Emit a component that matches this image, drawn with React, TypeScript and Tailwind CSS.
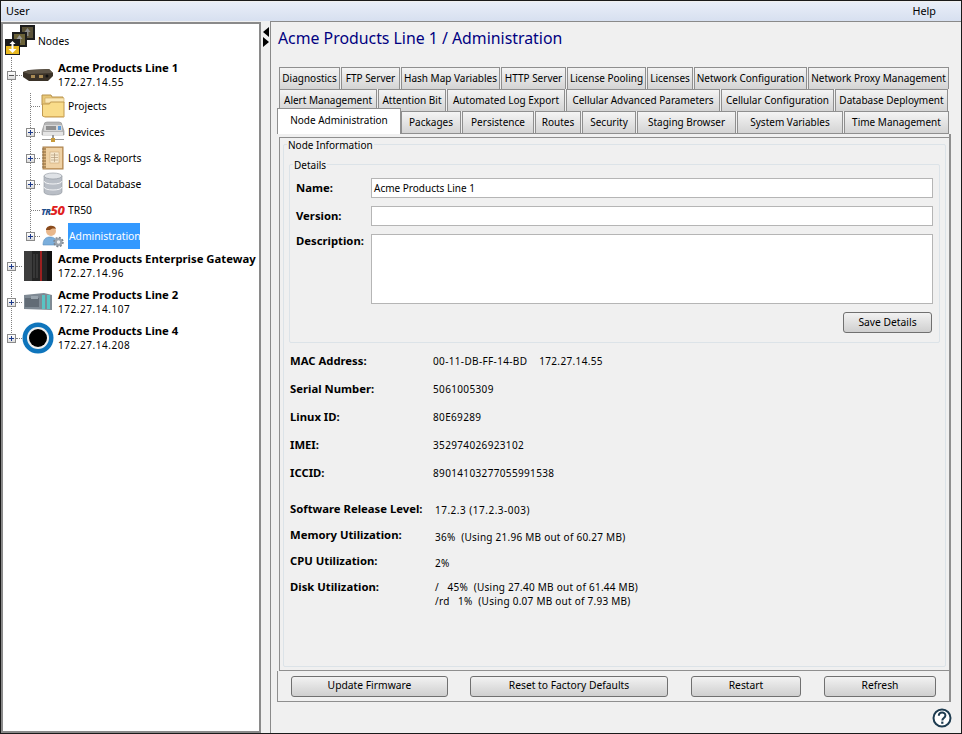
import React from "react";

const tabRow1 = [
  ["Diagnostics", 61], ["FTP Server", 59], ["Hash Map Variables", 99], ["HTTP Server", 65], ["License Pooling", 79], ["Licenses", 46], ["Network Configuration", 113], ["Network Proxy Management", 141],
] as const;
const tabRow2 = [
  ["Alert Management", 98], ["Attention Bit", 68], ["Automated Log Export", 118], ["Cellular Advanced Parameters", 154], ["Cellular Configuration", 113], ["Database Deployment", 113],
] as const;
const tabRow3 = [
  ["Packages", 60], ["Persistence", 72], ["Routes", 46], ["Security", 54], ["Staging Browser", 99], ["System Variables", 106], ["Time Management", 105],
] as const;

function Tab({ label, w }: { label: string; w: number }) {
  return (
    <div
      style={{ width: w }}
      className="h-[22px] shrink-0 flex items-center justify-center whitespace-nowrap border border-b-0 border-[#8f8f8f] bg-gradient-to-b from-[#f4f4f4] to-[#d4d4d4] text-black"
    >
      {label}
    </div>
  );
}

function Plus({ minus }: { minus?: boolean }) {
  return (
    <span className="w-[9px] h-[9px] border border-[#8a8a8a] bg-gradient-to-b from-white to-[#dcdcdc] flex items-center justify-center relative shrink-0">
      <span className={"absolute w-[5px] h-px " + (minus ? "bg-[#555]" : "bg-[#1d3a8a]")} />
      {!minus && <span className="absolute w-px h-[5px] bg-[#1d3a8a]" />}
    </span>
  );
}

function NodesIcon() {
  return (
    <svg width="32" height="33" viewBox="0 0 32 33">
      <rect x="17" y="1" width="15" height="15" fill="#1c1c1c" />
      <rect x="19" y="3" width="11" height="11" fill="#5a5238" />
      <path d="M24.500 4l3 4h-2v4h-2V8h-2z" fill="#8a8a8a" />
      <rect x="9" y="8" width="15" height="15" fill="#1c1c1c" />
      <rect x="11" y="10" width="11" height="11" fill="#6b6238" />
      <path d="M16.500 11l3 4h-2v4h-2v-4h-2z" fill="#9a9a9a" />
      <rect x="2" y="15" width="15" height="16" fill="#1c1c1c" />
      <rect x="3" y="22" width="13" height="8" fill="#e8b820" />
      <path d="M9.500 17l3 3h-2v5h3l-4 4-4-4h3v-5h-2z" fill="#fff" />
    </svg>
  );
}

function RouterIcon() {
  return (
    <svg width="32" height="14" viewBox="0 0 32 14">
      <path d="M1 4l6-2 20-1 4 4v3l-5 5H7l-6-4z" fill="#3a3228" />
      <path d="M1 4l6-2 20-1 4 4-24 1z" fill="#5c5346" />
      <rect x="9" y="7" width="4" height="3" fill="#a98b55" />
      <rect x="17" y="7" width="4" height="3" fill="#a98b55" />
      <circle cx="25" cy="8" r="1.500" fill="#111" />
    </svg>
  );
}

function FolderIcon() {
  return (
    <svg width="24" height="24" viewBox="0 0 24 24">
      <path d="M1 1h9l1 2h11v8H1z" fill="#e8c878" stroke="#b8924a" />
      <path d="M4 4h19v5H4z" fill="#fbe9b8" stroke="#c9a460" strokeWidth=".6" />
      <path d="M1.500 10h7l1-2h13.500v15H4l-2.500-1z" fill="#f9dc8a" stroke="#c19a50" />
      <path d="M3 22h20v1H3z" fill="#d8ae5c" />
    </svg>
  );
}

function DevicesIcon() {
  return (
    <svg width="24" height="24" viewBox="0 0 24 24">
      <path d="M3 5q0-3 3-3h12q3 0 3 3l2 6v4H1v-4z" fill="#b5b5b5" stroke="#909090" strokeWidth=".6" />
      <rect x="3" y="5" width="18" height="6" rx="1" fill="#d8d8d8" />
      <rect x="5" y="6" width="10" height="4" fill="#8f8f8f" />
      <rect x="17" y="6" width="3" height="4" fill="#5f9bd8" />
      <rect x="2" y="12" width="20" height="3" fill="#e4e4e4" />
      <rect x="11" y="15" width="2" height="5" fill="#999" />
      <rect x="1" y="19" width="22" height="1" fill="#999" />
      <rect x="10" y="18" width="4" height="4" fill="#c89b3c" />
    </svg>
  );
}

function LogsIcon() {
  return (
    <svg width="24" height="24" viewBox="0 0 24 24">
      <rect x="2" y="1" width="20" height="22" fill="#d9b078" stroke="#a87f4b" />
      <rect x="5" y="2" width="16" height="20" fill="#efd2a6" />
      <rect x="9" y="6" width="9" height="11" fill="#f8ead0" stroke="#c9a878" strokeWidth=".6" />
      <path d="M10 9h7M10 11.500h7M10 14h7M13.500 7v9" stroke="#b09878" strokeWidth=".7" />
      {[3, 6, 9, 12, 15, 18, 21].map((y) => (
        <path key={y} d={`M1 ${y}h4`} stroke="#8a6a40" />
      ))}
    </svg>
  );
}

function DbIcon() {
  return (
    <svg width="20" height="24" viewBox="0 0 20 24">
      <path d="M1 4v16c0 4 18 4 18 0V4z" fill="#b9bec6" stroke="#8d939c" strokeWidth=".6" />
      <ellipse cx="10" cy="4" rx="9" ry="3" fill="#dfe2e6" stroke="#8d939c" strokeWidth=".6" />
      <path d="M1 9c0 4 18 4 18 0M1 15c0 4 18 4 18 0" fill="none" stroke="#f2f3f5" />
    </svg>
  );
}

function AdminIcon() {
  return (
    <svg width="22" height="24" viewBox="0 0 22 24">
      <path d="M1 21c0-6 3-8 7-8s7 2 7 8z" fill="#7aaedc" stroke="#5d8fbe" strokeWidth=".6" />
      <circle cx="9" cy="7" r="5" fill="#e9b88c" />
      <path d="M4 6c0-5 9-6 10-1-3-1-5 0-6 1-1 0-3 0-4 0z" fill="#8a4a1c" />
      <circle cx="16.500" cy="18" r="4" fill="#9aa3ad" />
      <circle cx="16.500" cy="18" r="4.500" fill="none" stroke="#7b838c" strokeWidth="1.500" strokeDasharray="2 1.500" />
      <circle cx="16.500" cy="18" r="1.700" fill="#eef0f2" />
    </svg>
  );
}

function GatewayIcon() {
  return (
    <svg width="30" height="32" viewBox="0 0 30 32">
      <rect x="1" y="1" width="28" height="30" rx="1" fill="#242424" />
      <rect x="1" y="1" width="8" height="30" fill="#3d3d3d" />
      <rect x="17" y="1" width="2" height="30" fill="#9c2020" />
      <rect x="24" y="1" width="5" height="30" fill="#111" />
      <path d="M11 4v24M14 4v24" stroke="#4a4a4a" />
    </svg>
  );
}

function PlcIcon() {
  return (
    <svg width="30" height="20" viewBox="0 0 30 20">
      <path d="M1 3l20-2 8 2v15l-28-1z" fill="#7f8a94" />
      <rect x="2" y="6" width="14" height="9" fill="#626c76" />
      <rect x="8" y="4" width="7" height="3" fill="#9aa5ae" />
      <rect x="19" y="3" width="3" height="14" fill="#59c4c4" />
      <rect x="24" y="3" width="3" height="14" fill="#59c4c4" />
    </svg>
  );
}

function CircleIcon() {
  return (
    <svg width="32" height="32" viewBox="0 0 32 32">
      <circle cx="16" cy="16" r="15.500" fill="#0f75bc" />
      <circle cx="16" cy="16" r="11" fill="#f0f0f0" />
      <circle cx="16" cy="16" r="9" fill="#000" />
    </svg>
  );
}

function HelpIcon() {
  return (
    <svg width="20" height="20" viewBox="0 0 20 20">
      <circle cx="10" cy="10" r="8.500" fill="#fff" stroke="#1e3c50" strokeWidth="2" />
      <path d="M6.800 7.800c0-4.300 6.600-4.300 6.600-.4 0 2.500-3.100 2.600-3.100 5" fill="none" stroke="#1e3c50" strokeWidth="2" />
      <rect x="9.200" y="13.600" width="2.200" height="2.200" fill="#1e3c50" />
    </svg>
  );
}

function Child({ icon, label, plus, selected }: { icon: React.ReactNode; label: string; plus?: boolean; selected?: boolean }) {
  return (
    <div className="h-[26px] flex items-center text-[10.3px]">
      {plus ? (
        <>
          <span className="w-[23px] shrink-0" />
          <Plus />
          <span className="w-[5px] border-t border-dotted border-[#808080] shrink-0" />
        </>
      ) : (
        <>
          <span className="w-[28px] shrink-0" />
          <span className="w-[9px] border-t border-dotted border-[#808080] shrink-0" />
        </>
      )}
      <span className="w-[26px] flex items-center justify-center shrink-0">{icon}</span>
      <span className={(selected ? "bg-[#3399ff] text-white h-[26px] w-[72px] flex items-center pl-px " : "") + "ml-[2px] pt-[2px] whitespace-nowrap"}>{label}</span>
    </div>
  );
}

function NodeRow({ icon, name, ip, minus }: { icon: React.ReactNode; name: string; ip: string; minus?: boolean }) {
  return (
    <div className="h-[36px] flex items-center">
      <span className="w-[4px] shrink-0" />
      <Plus minus={minus} />
      <span className="w-[6px] border-t border-dotted border-[#808080] shrink-0" />
      <span className="w-[32px] flex items-center justify-center shrink-0">{icon}</span>
      <div className="ml-[4px] leading-[14px] whitespace-nowrap">
        <div className="font-bold text-[11.3px]">{name}</div>
        <div className="tracking-[0.55px]">{ip}</div>
      </div>
    </div>
  );
}

const infoRows = [
  ["MAC Address:", "00-11-DB-FF-14-BD    172.27.14.55"],
  ["Serial Number:", "5061005309"],
  ["Linux ID:", "80E69289"],
  ["IMEI:", "352974026923102"],
  ["ICCID:", "89014103277055991538"],
];

function Btn({ label, w }: { label: string; w: number }) {
  return (
    <button
      style={{ width: w }}
      className="h-[21px] rounded-[3px] border border-[#707070] bg-gradient-to-b from-[#f2f2f2] to-[#cfcfcf] text-black text-[10.3px] shrink-0"
    >
      {label}
    </button>
  );
}

export default function App() {
  return (
    <div className="w-[962px] h-[734px] bg-[#f0f0f0] text-black text-[10px] [font-family:'Noto_Sans',sans-serif] overflow-hidden flex flex-col border border-[#1a1a1a]">
      <div className="h-[19px] shrink-0 mt-px bg-gradient-to-b from-[#e9eef8] to-[#d7e0f0] flex items-center justify-between pl-[5px] pr-[25px] text-[10.8px]">
        <span>User</span>
        <span>Help</span>
      </div>
      <div className="flex-1 flex min-h-0">
        <div className="w-[260px] shrink-0 bg-white border-2 border-[#8a8a8a] relative mt-px">
          <span className="absolute left-[8px] top-[33px] h-[280px] border-l border-dotted border-[#808080]" />
          <span className="absolute left-[27px] top-[69px] h-[143px] border-l border-dotted border-[#808080]" />
          <div className="h-[33px] flex items-center">
            <span className="shrink-0"><NodesIcon /></span>
            <span className="ml-[3px] mt-[2px] text-[10.3px]">Nodes</span>
          </div>
          <NodeRow minus icon={<RouterIcon />} name="Acme Products Line 1" ip="172.27.14.55" />
          <Child icon={<FolderIcon />} label="Projects" />
          <Child plus icon={<DevicesIcon />} label="Devices" />
          <Child plus icon={<LogsIcon />} label="Logs & Reports" />
          <Child plus icon={<DbIcon />} label="Local Database" />
          <Child
            icon={<span className="italic font-extrabold tracking-[-0.5px] w-[24px] whitespace-nowrap leading-none"><span className="text-[#1f4e8c] text-[9px]">TR</span><span className="text-[#e02020] text-[13px]">50</span></span>}
            label="TR50"
          />
          <Child plus selected icon={<AdminIcon />} label="Administration" />
          <div className="-mt-px">
            <NodeRow icon={<GatewayIcon />} name="Acme Products Enterprise Gateway" ip="172.27.14.96" />
          </div>
          <NodeRow icon={<PlcIcon />} name="Acme Products Line 2" ip="172.27.14.107" />
          <NodeRow icon={<CircleIcon />} name="Acme Products Line 4" ip="172.27.14.208" />
        </div>
        <div className="w-[9px] shrink-0 flex flex-col items-center pt-[6px]">
          <span className="w-0 h-0 border-y-[5px] border-y-transparent border-r-[6px] border-r-black" />
          <span className="w-0 h-0 border-y-[5px] border-y-transparent border-l-[6px] border-l-black" />
        </div>
        <div className="flex-1 border-l border-t border-[#8a8a8a] flex flex-col pl-[8px] min-w-0">
          <div className="h-[45px] shrink-0 text-[#000080] text-[15.85px] pt-[4px] leading-[24px] -ml-px">
            Acme Products Line 1 / Administration
          </div>
          <div className="relative w-[670px] h-[67px] shrink-0 border-b border-[#8f8f8f]">
            <div className="flex gap-px">{tabRow1.map(([l, w]) => <Tab key={l} label={l} w={w} />)}</div>
            <div className="flex gap-px">{tabRow2.map(([l, w]) => <Tab key={l} label={l} w={w} />)}</div>
            <div className="flex gap-px pl-[122px]">{tabRow3.map(([l, w]) => <Tab key={l} label={l} w={w} />)}</div>
            <div className="absolute left-[-2px] top-[41px] w-[124px] h-[26px] bg-white border border-b-0 border-[#8f8f8f] flex items-center justify-center z-10 pb-[2px]">
              Node Administration
            </div>
          </div>
          <div className="w-[672px] h-[537px] shrink-0 border-r-2 border-[#8f8f8f] bg-[#f0f0f0] pt-[3px]">
            <div className="h-[534px] border-t border-l border-b border-[#8f8f8f] pl-[3px] pt-[6px] pr-[3px]">
              <div className="relative border border-[#dce3e8] rounded-[2px] h-[523px] px-[5px] pt-[19px]">
                <span className="absolute left-[3px] top-[-7px] px-[1px] bg-[#f0f0f0] leading-[14px]">Node Information</span>
                <div className="relative border border-[#dce3e8] rounded-[2px] h-[179px] px-[6px] pt-[13px]">
                  <span className="absolute left-[3px] top-[-7px] px-[1px] bg-[#f0f0f0] leading-[14px]">Details</span>
                  <div className="grid grid-cols-[75px_562px] gap-y-[8px]">
                    <span className="font-bold text-[11.3px] h-[20px] flex items-center">Name:</span>
                    <div className="h-[20px] bg-white border border-[#b5b5b5] px-[2px] flex items-center">Acme Products Line 1</div>
                    <span className="font-bold text-[11.3px] h-[20px] flex items-center">Version:</span>
                    <div className="h-[20px] bg-white border border-[#b5b5b5]" />
                    <span className="font-bold text-[11.3px] h-[14px] flex items-center">Description:</span>
                    <div className="h-[70px] bg-white border border-[#b5b5b5]" />
                  </div>
                  <div className="flex justify-end mt-[8px] pr-[1px]"><Btn label="Save Details" w={89} /></div>
                </div>
                <div className="grid grid-cols-[143px_1fr] mt-[4px] pl-[1px]">
                  {infoRows.map(([k, v]) => (
                    <React.Fragment key={k}>
                      <span className="font-bold text-[11.3px] h-[28px] flex items-center">{k}</span>
                      <span className="h-[28px] flex items-center whitespace-pre tracking-[0.35px]">{v}</span>
                    </React.Fragment>
                  ))}
                </div>
                <div className="grid grid-cols-[145px_1fr] mt-[9px] pl-[1px] auto-rows-[26px]">
                  <span className="font-bold text-[11.3px] flex items-center whitespace-nowrap">Software Release Level:</span>
                  <span className="flex items-center pt-[2px] tracking-[0.5px]">17.2.3 (17.2.3-003)</span>
                  <span className="font-bold text-[11.3px] flex items-center">Memory Utilization:</span>
                  <span className="flex items-center pt-[4px] whitespace-pre tracking-[0.25px]">36%  (Using 21.96 MB out of 60.27 MB)</span>
                  <span className="font-bold text-[11.3px] flex items-center">CPU Utilization:</span>
                  <span className="flex items-center pt-[4px] tracking-[0.25px]">2%</span>
                  <span className="font-bold text-[11.3px] flex items-start pt-[5px]">Disk Utilization:</span>
                  <div className="leading-[14px] pt-[6px] whitespace-pre tracking-[0.25px]">
                    <div>/   45%  (Using 27.40 MB out of 61.44 MB)</div>
                    <div>/rd   1%  (Using 0.07 MB out of 7.93 MB)</div>
                  </div>
                </div>
              </div>
            </div>
          </div>
          <div className="w-[674px] h-[31px] shrink-0 border-r-2 border-b border-l border-[#8f8f8f] flex items-center pl-[13px] -ml-[2px]">
            <Btn label="Update Firmware" w={157} />
            <span className="w-[22px]" />
            <Btn label="Reset to Factory Defaults" w={198} />
            <span className="w-[23px]" />
            <Btn label="Restart" w={110} />
            <span className="w-[23px]" />
            <Btn label="Refresh" w={112} />
          </div>
          <div className="flex-1 flex justify-end items-center pr-[9px]"><HelpIcon /></div>
        </div>
      </div>
    </div>
  );
}
